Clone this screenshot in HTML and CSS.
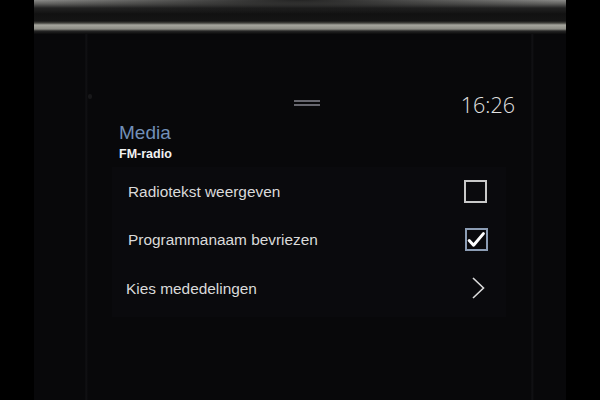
FILE: index.html
```html
<!DOCTYPE html>
<html lang="nl">
<head>
  <meta charset="UTF-8" />
  <title>Media - FM-radio</title>
  <meta name="viewport" content="width=device-width, initial-scale=1.0" />
  <link rel="stylesheet" href="styles.css">
</head>
<body>

<div class="frame">
  <!-- bezel with chrome trim -->
  <div class="bezel"></div>

  <div class="screen">
    <div class="topbar">
      <span class="cam"></span>
      <div class="handle"><span></span><span></span></div>
      <div class="clock">16:26</div>
    </div>

    <div class="title">
      <div class="app">Media</div>
      <div class="sub">FM-radio</div>
    </div>

    <div class="panel">
      <div class="row">
        <span class="label">Radiotekst weergeven</span>
        <span class="box"></span>
      </div>
      <div class="row">
        <span class="label">Programmanaam bevriezen</span>
        <span class="box checked">
          <svg width="19" height="19" viewBox="0 0 19 19">
            <path d="M2.2 10.5 L6.6 15.2 L16.4 3.6" fill="none" stroke="#fff" stroke-width="3" stroke-linecap="round" stroke-linejoin="round"/>
          </svg>
        </span>
      </div>
      <div class="row">
        <span class="label">Kies mededelingen</span>
        <svg class="chev" width="14" height="22" viewBox="0 0 14 22">
          <path d="M2 1 L12.5 11 L2 21" fill="none" stroke="#dcdcdc" stroke-width="1.6"/>
        </svg>
      </div>
    </div>
  </div>
</div>

</body>
</html>
```

FILE: styles.css
```css
* { box-sizing: border-box; }
body {
  margin: 0;
  background: #000;
  height: 400px;
  overflow: hidden;
  font-family: 'Liberation Sans', Arial, sans-serif;
}

.frame {
  margin: 0 34px;
  height: 400px;
  background: #08080a;
  display: flex;
  flex-direction: column;
}

.bezel {
  height: 34px;
  background:
    radial-gradient(ellipse 260px 14px at 50% 0, rgba(18,18,18,0.85), rgba(18,18,18,0) 100%),
    linear-gradient(to bottom,
      #8a8a88 0, #5c5c5a 4px, #222 8px, #111 14px, #151515 21px,
      #44443f 23px, #a6a69e 25px, #8c8c85 29px, #262626 31px, #0b0b0c 34px);
}

.screen {
  flex: 1;
  display: flex;
  flex-direction: column;
  background: linear-gradient(to right,
    #08080a 51px, #121215 52px, #08080a 54px,
    #08080a 497px, #131316 498px, #08080a 500px);
}

.topbar {
  margin-top: 56px;
  height: 26px;
  display: grid;
  grid-template-columns: 1fr auto 1fr;
  align-items: center;
  position: relative;
}

.cam {
  position: absolute;
  left: 54px;
  top: 4px;
  width: 4px;
  height: 5px;
  border-radius: 2px;
  background: #18181a;
}

.handle {
  grid-column: 2;
  display: flex;
  flex-direction: column;
  gap: 2px;
  margin-left: 14px;
  margin-top: -4px;
}
.handle span {
  display: block;
  width: 26px;
  height: 2px;
  background: #66666e;
}

.clock {
  justify-self: end;
  padding-right: 51px;
  font-family: 'Open Sans', 'Liberation Sans', sans-serif;
  font-weight: 300;
  font-size: 21.5px;
  color: #e2e2e2;
}

.title {
  margin-top: 6px;
  padding-left: 85px;
}
.app {
  font-size: 19px;
  line-height: 22px;
  color: #7290b8;
}
.sub {
  margin-top: 3px;
  font-size: 12.5px;
  line-height: 15px;
  font-weight: bold;
  color: #f2f2f2;
}

.panel {
  margin: 5px 0 0 78px;
  width: 394px;
  padding-bottom: 4px;
  background: #0a0a0d;
}

.row {
  height: 48.5px;
  display: flex;
  align-items: center;
  justify-content: space-between;
  padding: 0 19px 0 16px;
}
.row .label {
  font-size: 15.4px;
  color: #dadada;
  padding-top: 1px;
}
.row:last-child .label { margin-left: -2px; }

.box {
  width: 23px;
  height: 23px;
  border: 2px solid #c9c9c9;
  display: flex;
  align-items: center;
  justify-content: center;
}
.box.checked {
  border-color: #8c9db4;
  margin-right: -1px;
}

.chev { margin-right: 2px; }
```
